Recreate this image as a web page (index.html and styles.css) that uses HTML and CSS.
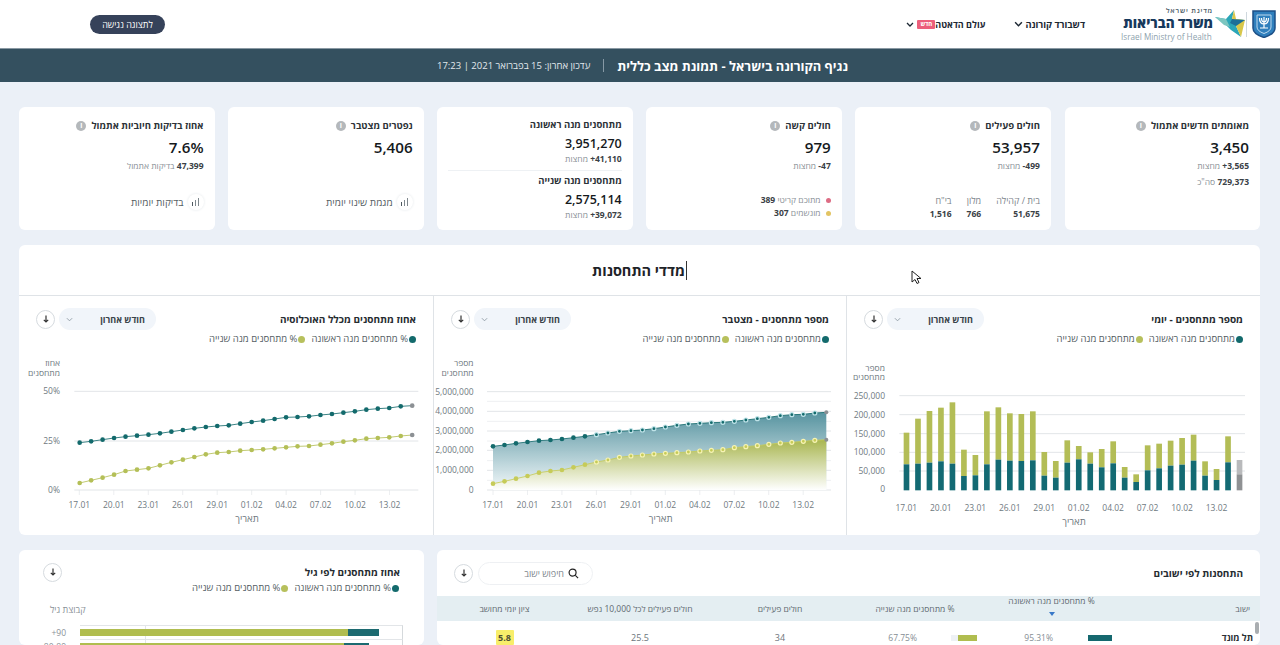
FILE: index.html
```html
<!DOCTYPE html>
<html lang="he" dir="rtl">
<head>
<meta charset="utf-8">
<title>נגיף הקורונה בישראל</title>
<link rel="stylesheet" href="styles.css">
</head>
<body>
<header class="topbar">
  <div class="brand">
    <svg class="emblem" viewBox="0 0 24 28" width="24" height="28">
      <path d="M1 1h22v17q0 6-11 9.500Q1 24 1 18z" fill="#2f7fbd" stroke="#1d4f86" stroke-width="1.500"/>
      <path d="M5 5h14v12q0 4-7 6.500Q5 21 5 17z" fill="none" stroke="#bcd9ee" stroke-width="1"/>
      <path d="M12 7v11M8 18h8M7.500 8q0 6 4.500 6t4.500-6M9.500 8q0 4 2.500 4t2.500-4" fill="none" stroke="#fff" stroke-width="1.200"/>
    </svg>
    <span class="brand-sep"></span>
    <svg class="star" viewBox="0 0 30 28" width="30" height="28">
      <polygon points="0,7 11,9 19,0 17,9 30,10 21,16 26,27 16,20 10,14" fill="#2ba6b8"/>
      <polygon points="0,7 11,9 15,17 9,15" fill="#7cc6c0"/>
      <polygon points="19,0 17,9 23,12 21,16 26,27 30,10 21,9" fill="#d8c74a"/>
      <polygon points="17,9 30,10 21,16 15,13" fill="#1c6f98"/>
    </svg>
    <div class="brand-text">
      <span class="brand-state">מדינת ישראל</span>
      <span class="brand-name">משרד הבריאות</span>
      <span class="brand-en" dir="ltr">Israel Ministry of Health</span>
    </div>
  </div>
  <nav class="nav">
    <a class="nav-item nav-first">דשבורד קורונה <svg class="chev" viewBox="0 0 8 5" width="9" height="6"><path d="M1 1l3 3 3-3" fill="none" stroke="#1c2733" stroke-width="1.300"/></svg></a>
    <a class="nav-item nav-second"><span class="nav-label">עולם הדאטה</span><span class="new">חדש</span><svg class="chev" viewBox="0 0 8 5" width="8" height="5"><path d="M1 1l3 3 3-3" fill="none" stroke="#1c2733" stroke-width="1.300"/></svg></a>
  </nav>
  <a class="access">לתצוגה נגישה</a>
</header>

<div class="strip">
  <h1>נגיף הקורונה בישראל - תמונת מצב כללית</h1>
  <span class="strip-sep"></span>
  <span class="updated">עדכון אחרון: 15 בפברואר 2021 | 17:23</span>
</div>

<main class="page">
  <section class="cards">
    <article class="card">
      <h3>מאומתים חדשים אתמול <i class="info">i</i></h3>
      <div class="value">3,450</div>
      <p class="sub"><b><bdi>+3,565</bdi></b> מחצות</p>
      <p class="sub sub-gap"><b>729,373</b> סה"כ</p>
    </article>
    <article class="card">
      <h3>חולים פעילים <i class="info">i</i></h3>
      <div class="value">53,957</div>
      <p class="sub"><b><bdi>-499</bdi></b> מחצות</p>
      <div class="split">
        <div><span>בית / קהילה</span><b>51,675</b></div>
        <div><span>מלון</span><b>766</b></div>
        <div><span>בי"ח</span><b>1,516</b></div>
      </div>
    </article>
    <article class="card">
      <h3>חולים קשה <i class="info">i</i></h3>
      <div class="value">979</div>
      <p class="sub"><b><bdi>-47</bdi></b> מחצות</p>
      <div class="dots">
        <p class="sub"><i class="dot dot-red"></i> מתוכם קריטי <b>389</b></p>
        <p class="sub"><i class="dot dot-gold"></i> מונשמים <b>307</b></p>
      </div>
    </article>
    <article class="card card-double">
      <h3>מתחסנים מנה ראשונה</h3>
      <div class="value">3,951,270</div>
      <p class="sub"><b><bdi>+41,110</bdi></b> מחצות</p>
      <hr>
      <h3>מתחסנים מנה שנייה</h3>
      <div class="value">2,575,114</div>
      <p class="sub"><b><bdi>+39,072</bdi></b> מחצות</p>
    </article>
    <article class="card">
      <h3>נפטרים מצטבר <i class="info">i</i></h3>
      <div class="value">5,406</div>
      <a class="trend"><span class="trend-icon"><i></i><i></i><i></i></span> מגמת שינוי יומית</a>
    </article>
    <article class="card">
      <h3>אחוז בדיקות חיוביות אתמול <i class="info">i</i></h3>
      <div class="value">7.6%</div>
      <p class="sub"><b>47,399</b> בדיקות אתמול</p>
      <a class="trend"><span class="trend-icon"><i></i><i></i><i></i></span> בדיקות יומיות</a>
    </article>
  </section>

  <section class="panel metrics">
    <h2 class="metrics-title"><span class="caret">מדדי התחסנות</span></h2>
    <div class="metric-cols">
      <div class="metric">
        <div class="metric-head">
          <h4>מספר מתחסנים - יומי</h4>
          <div class="controls">
            <span class="select">חודש אחרון <svg viewBox="0 0 8 5" width="7" height="5"><path d="M1 1l3 3 3-3" fill="none" stroke="#8d99a3" stroke-width="1"/></svg></span>
            <span class="down"><svg viewBox="0 0 10 10" width="10" height="10"><path d="M5 1.500v6.500M2.800 5.800L5 8l2.200-2.200" fill="none" stroke="#333" stroke-width="1.200"/></svg></span>
          </div>
        </div>
        <div class="legend"><span><i class="dot dot-teal"></i>מתחסנים מנה ראשונה</span><span><i class="dot dot-olive"></i>מתחסנים מנה שנייה</span></div>
        <svg class="plot" id="chart-daily" width="414" height="185" viewBox="0 162 1242 555"></svg>
      </div>
      <div class="metric">
        <div class="metric-head">
          <h4>מספר מתחסנים - מצטבר</h4>
          <div class="controls">
            <span class="select">חודש אחרון <svg viewBox="0 0 8 5" width="7" height="5"><path d="M1 1l3 3 3-3" fill="none" stroke="#8d99a3" stroke-width="1"/></svg></span>
            <span class="down"><svg viewBox="0 0 10 10" width="10" height="10"><path d="M5 1.500v6.500M2.800 5.800L5 8l2.200-2.200" fill="none" stroke="#333" stroke-width="1.200"/></svg></span>
          </div>
        </div>
        <div class="legend"><span><i class="dot dot-teal"></i>מתחסנים מנה ראשונה</span><span><i class="dot dot-olive"></i>מתחסנים מנה שנייה</span></div>
        <svg class="plot" id="chart-total" width="414" height="185" viewBox="0 162 1242 555"></svg>
      </div>
      <div class="metric">
        <div class="metric-head">
          <h4>אחוז מתחסנים מכלל האוכלוסיה</h4>
          <div class="controls">
            <span class="select">חודש אחרון <svg viewBox="0 0 8 5" width="7" height="5"><path d="M1 1l3 3 3-3" fill="none" stroke="#8d99a3" stroke-width="1"/></svg></span>
            <span class="down"><svg viewBox="0 0 10 10" width="10" height="10"><path d="M5 1.500v6.500M2.800 5.800L5 8l2.200-2.200" fill="none" stroke="#333" stroke-width="1.200"/></svg></span>
          </div>
        </div>
        <div class="legend"><span><i class="dot dot-teal"></i>% מתחסנים מנה ראשונה</span><span><i class="dot dot-olive"></i>% מתחסנים מנה שנייה</span></div>
        <svg class="plot" id="chart-percent" width="414" height="185" viewBox="12 162 1242 555"></svg>
      </div>
    </div>
  </section>

  <section class="bottom">
    <div class="panel towns">
      <div class="towns-head">
        <h4>התחסנות לפי ישובים</h4>
        <div class="controls">
          <span class="search"><svg viewBox="0 0 12 12" width="11" height="11"><circle cx="5" cy="5" r="3.800" fill="none" stroke="#222" stroke-width="1.300"/><path d="M8 8l3 3" stroke="#222" stroke-width="1.300"/></svg> חיפוש ישוב</span>
          <span class="down"><svg viewBox="0 0 10 10" width="10" height="10"><path d="M5 1.500v6.500M2.800 5.800L5 8l2.200-2.200" fill="none" stroke="#333" stroke-width="1.200"/></svg></span>
        </div>
      </div>
      <div class="trow thead">
        <span class="t-name">ישוב</span>
        <span class="t-sorted">% מתחסנים מנה ראשונה<i class="sort"></i></span>
        <span>% מתחסנים מנה שנייה</span>
        <span>חולים פעילים</span>
        <span>חולים פעילים לכל 10,000 נפש</span>
        <span>ציון יומי מחושב</span>
      </div>
      <div class="trow tbody">
        <b class="t-name">תל מונד</b>
        <span class="t-bar t-first"><i class="track"><i class="fill fill-teal" style="width:100%"></i></i>95.31%</span>
        <span class="t-bar t-second"><i class="track"><i class="fill fill-olive" style="width:72%"></i></i>67.75%</span>
        <span>34</span>
        <span>25.5</span>
        <span><b class="score">5.8</b></span>
      </div>
      <span class="scroll-thumb"></span>
    </div>
    <div class="panel ages">
      <div class="ages-head">
        <span class="down"><svg viewBox="0 0 10 10" width="10" height="10"><path d="M5 1.500v6.500M2.800 5.800L5 8l2.200-2.200" fill="none" stroke="#333" stroke-width="1.200"/></svg></span>
        <h4>אחוז מתחסנים לפי גיל</h4>
      </div>
      <div class="legend"><span><i class="dot dot-teal"></i>% מתחסנים מנה ראשונה</span><span><i class="dot dot-olive"></i>% מתחסנים מנה שנייה</span></div>
      <div class="age-axis">קבוצת גיל</div>
      <div class="age-row">
        <span class="age-label">+90</span>
        <div class="age-plot"><i class="age-bar age-bar-a"><i class="age-olive age-olive-a"></i></i></div>
      </div>
      <div class="age-row">
        <span class="age-label">80-89</span>
        <div class="age-plot"><i class="age-bar age-bar-b"><i class="age-olive age-olive-b"></i></i></div>
      </div>
    </div>
  </section>
</main>

<svg class="pointer" viewBox="0 0 11 15" width="11" height="15"><path d="M1 1v11l3-2.500 2 4 2-1-2-4h4z" fill="#fff" stroke="#222" stroke-width="1"/></svg>
<script src="charts.js"></script>
</body>
</html>
```
FILE: styles.css
```css
* { box-sizing: border-box; }
html, body { margin: 0; height: 645px; overflow: hidden; }
body {
  background: #ebf0f7;
  color: #20262c;
  font-family: "Open Sans", "Liberation Sans", "DejaVu Sans", sans-serif;
  position: relative;
}
h1, h2, h3, h4, p { margin: 0; }
i { font-style: normal; }

.topbar {
  height: 49px;
  background: #fff;
  display: flex;
  align-items: center;
  padding: 0 4px 0 90px;
  border-bottom: 1px solid #8a99a3;
}
.brand { display: flex; align-items: center; margin-left: 36px; }
.emblem { display: block; margin-bottom: 1px; }
.brand-sep { width: 1px; height: 25px; background: #cfd8de; margin: 0 5px 0 1px; }
.star { display: block; margin-left: 2px; }
.brand-text { display: flex; flex-direction: column; width: 92px; }
.brand-state { font-size: 7px; line-height: 9px; color: #4b5c68; font-weight: 600; letter-spacing: 0.800px; }
.brand-name { font-size: 13.500px; line-height: 17px; font-weight: 800; color: #17395c; white-space: nowrap; }
.brand-en { font-size: 8.200px; line-height: 10px; color: #8ea2ad; white-space: nowrap; text-align: left; }
.nav { display: flex; align-items: center; }
.nav-item { display: flex; align-items: center; gap: 3px; font-size: 9.300px; font-weight: 700; color: #1c2733; white-space: nowrap; }
.nav-first { gap: 2px; margin-left: 29px; }
.nav-label { font-size: 9px; margin-left: -3px; }
.chev { display: block; }
.new { background: #ec5f7b; color: #fff; font-size: 6px; line-height: 9px; width: 18px; text-align: center; border-radius: 1px; }
.access {
  margin-right: auto;
  width: 75px;
  height: 19px;
  border-radius: 10px;
  background: #36425a;
  color: #fff;
  font-size: 9px;
  line-height: 19px;
  text-align: center;
}

.strip {
  height: 33px;
  background: #34505f;
  color: #fff;
  display: flex;
  align-items: center;
  justify-content: center;
  padding-left: 5px;
}
.strip h1 { font-size: 12.900px; font-weight: 700; white-space: nowrap; }
.strip-sep { width: 1px; height: 13px; background: #8699a5; margin: 0 13px; }
.updated { font-size: 9.500px; color: #e2e9ed; white-space: nowrap; }

.page { padding: 25px 20px 0 19px; }
.cards { display: grid; grid-template-columns: repeat(6, 1fr); gap: 13.600px; }
.card {
  height: 123px;
  background: #fff;
  border-radius: 6px;
  padding: 13px 11px 9px;
  display: flex;
  flex-direction: column;
}
.card h3 { display: flex; align-items: center; gap: 5px; font-size: 9.500px; line-height: 12px; font-weight: 700; color: #2d3338; }
.info {
  width: 10px; height: 10px; border-radius: 50%;
  background: #b4b8bb; color: #fff;
  font-size: 7px; line-height: 10px; text-align: center; font-weight: 700;
}
.value { font-size: 15.200px; line-height: 20px; font-weight: 600; color: #15191c; margin-top: 5px; }
.sub { font-size: 8.500px; line-height: 12px; color: #8a9197; margin-top: 3px; }
.sub b { color: #3a4146; font-weight: 700; }
.sub-gap { margin-top: 4px; }
.split { margin-top: auto; margin-bottom: 1px; display: flex; gap: 15px; font-size: 9px; color: #7d858b; }
.split div { display: flex; flex-direction: column; gap: 1px; }
.split span { line-height: 12px; }
.split b { color: #3a4146; font-size: 8.500px; line-height: 12px; font-weight: 700; }
.split div:first-child { min-width: 43px; }
.dots { margin-top: auto; padding-bottom: 2px; }
.dots .sub { margin-top: 1px; }
.dots .dot { margin-left: 3px; }
.dot { display: inline-block; width: 5px; height: 5px; border-radius: 50%; margin-left: 1px; }
.dot-red { background: #dd6c84; }
.dot-gold { background: #e2c463; }
.dot-teal { background: #136a6c; width: 7px; height: 7px; }
.dot-olive { background: #b7c05c; width: 7px; height: 7px; }
.card-double { padding-top: 12px; }
.card-double .value { font-size: 12.500px; margin-top: 4px; line-height: 18px; }
.card-double .sub { margin-top: 1px; line-height: 10px; }
.card-double hr { border: 0; height: 1px; background: #eef1f4; width: 100%; margin: 6px 0 4px; }
.trend {
  margin-top: auto;
  display: flex; align-items: center; gap: 4px;
  font-size: 10px; color: #555e64; padding-bottom: 11px;
}
.trend-icon {
  width: 16px; height: 16px; border-radius: 50%;
  box-shadow: 0 0 3px #e3e7ea;
  display: flex; align-items: flex-end; justify-content: center; gap: 1.500px;
  padding-bottom: 4px;
}
.trend-icon i { width: 1.300px; background: #4f5a60; }
.trend-icon i:nth-child(1) { height: 8px; background: #7f888d; }
.trend-icon i:nth-child(2) { height: 6px; background: #7f888d; }
.trend-icon i:nth-child(3) { height: 4px; }

.panel { background: #fff; border-radius: 6px; }
.metrics { height: 290px; margin-top: 15px; overflow: hidden; }
.metrics-title {
  height: 51px;
  border-bottom: 1px solid #dfe3e7;
  text-align: center;
  font-size: 14.500px;
  line-height: 52px;
  font-weight: 700;
  color: #1e2328;
}
.caret { border-right: 1px solid #333; padding-right: 1px; }
.metric-cols { display: grid; grid-template-columns: 414px 413px 414px; }
.metric { height: 239px; border-left: 1px solid #dfe3e7; padding-top: 12px; }
.metric:last-child { border-left: 0; }
.metric-head { display: flex; justify-content: space-between; align-items: center; height: 22px; padding: 0 17px; }
.metric h4, .towns h4, .ages h4 { font-size: 10px; font-weight: 700; color: #262c31; white-space: nowrap; }
.controls { display: flex; align-items: center; gap: 4px; }
.select {
  width: 97px; height: 22px; border-radius: 11px;
  background: #f1f5fa;
  display: flex; align-items: center; justify-content: space-between;
  padding: 0 11px 0 7px;
  font-size: 9px; font-weight: 700; color: #3b444b;
  white-space: nowrap;
}
.down {
  width: 19px; height: 19px; border-radius: 50%;
  border: 1px solid #d6dbdf; background: #fff;
  display: flex; align-items: center; justify-content: center;
  flex: none;
}
.legend { display: flex; gap: 6px; padding: 3px 17px 0; font-size: 9.500px; line-height: 12px; color: #555e64; white-space: nowrap; }
.legend .dot { vertical-align: -0.500px; margin-left: 1px; }
.plot { display: block; direction: ltr; margin: 6px 0 0 auto; }
.plot text { font-family: "Open Sans", "Liberation Sans", sans-serif; font-size: 25.500px; fill: #6f7a81; }
.plot .axis-title { font-size: 29px; }

.bottom { display: grid; grid-template-columns: 823px 405px; gap: 13px; margin-top: 15px; }
.towns { height: 95px; position: relative; overflow: hidden; }
.towns-head { display: flex; justify-content: space-between; align-items: center; height: 46px; padding: 0 17px 0 0; }
.towns-head .controls { margin-left: 17px; gap: 5px; }
.search {
  width: 115px; height: 23px; border-radius: 12px;
  border: 1px solid #eef0f3;
  display: flex; align-items: center; gap: 4px;
  padding: 0 13px;
  font-size: 9px; color: #7c858b;
}
.trow { display: grid; grid-template-columns: 135px 147px 126px 144px 136px 135px; align-items: center; text-align: center; }
.thead { height: 25px; background: #e4eef2; font-size: 8.500px; color: #5f6a71; white-space: nowrap; }
.t-name { text-align: right; padding-right: 10px; }
.t-sorted { display: flex; flex-direction: column; align-items: center; margin-top: -6px; line-height: 12px; }
.sort { width: 0; height: 0; margin-top: 5px; border: 3px solid transparent; border-top: 4px solid #3878c8; border-bottom: 0; }
.tbody { height: 33px; font-size: 9px; color: #6c757b; }
.tbody b.t-name { color: #2a3035; font-size: 9px; padding-right: 7px; }
.t-bar { display: flex; align-items: center; font-size: 8.500px; color: #858d93; }
.t-first { padding-right: 13px; gap: 35px; }
.t-second { padding-right: 1px; gap: 34px; }
.track { display: block; height: 6px; background: #eef1f5; }
.t-first .track { width: 24px; }
.t-second .track { width: 26px; }
.fill { display: block; height: 6px; }
.fill-teal { background: #15686f; }
.fill-olive { background: #b0bd4f; }
.score { display: inline-block; width: 18px; line-height: 15px; background: #f8ee6a; color: #4c4f35; border-radius: 1px; font-size: 9px; }
.scroll-thumb { position: absolute; top: 72px; right: 1px; width: 4px; height: 12px; background: #a9adb0; border-radius: 2px; }

.ages { height: 95px; padding-top: 13px; overflow: hidden; }
.ages-head { direction: ltr; display: flex; justify-content: space-between; align-items: center; padding: 0 24px; height: 18px; }
.ages .legend { padding: 0 25px 0; margin-top: 1px; }
.age-axis { font-size: 9px; color: #8a9298; white-space: nowrap; line-height: 12px; margin-top: 10px; text-align: left; padding-left: 31px; }
.age-row { direction: ltr; display: flex; align-items: center; height: 14px; }
.age-axis + .age-row { margin-top: 9px; }
.age-label { width: 47px; text-align: right; font-size: 8.500px; color: #8a9298; flex: none; }
.age-plot {
  margin-left: 14px; width: 323px; height: 14px;
  border-right: 1px solid #d5d9dc; border-top: 1px solid #e2e5e8;
  display: flex; align-items: center;
  background: linear-gradient(#e2e5e8, #e2e5e8) 65px 0 / 1px 100% no-repeat;
}
.age-bar { display: block; height: 7px; background: #1c6a70; }
.age-bar-a { width: 299px; }
.age-bar-b { width: 289px; }
.age-olive { display: block; height: 7px; background: #b0bd4f; }
.age-olive-a { width: 268px; }
.age-olive-b { width: 264px; }

.pointer { position: absolute; left: 911px; top: 270px; }
```
FILE: charts.js
```js
const NS = 'http://www.w3.org/2000/svg';
const X_LABELS = ['17.01', '20.01', '23.01', '26.01', '29.01', '01.02', '04.02', '07.02', '10.02', '13.02'];
const TEAL = '#136a6c', OLIVE = '#b4bf57', GREY = '#8c9094';

function add(svg, name, attrs, text) {
  const el = document.createElementNS(NS, name);
  for (const k in attrs) el.setAttribute(k, attrs[k]);
  if (text !== undefined) el.textContent = text;
  svg.appendChild(el);
  return el;
}

function frame(svg, o) {
  o.grid.filter(g => !g.bare).forEach(g => add(svg, 'line', { x1: o.gx0, x2: o.gx1, y1: g.y, y2: g.y, stroke: g.minor ? '#eef0f2' : '#e2e5e8', 'stroke-width': 3 }));
  o.grid.filter(g => g.label !== undefined).forEach(g =>
    add(svg, 'text', { x: o.lx, y: g.y + 9, 'text-anchor': 'end' }, g.label));
  o.ylabel.forEach((t, i) =>
    add(svg, 'text', { x: o.lx, y: o.yl + i * 29, 'text-anchor': 'end' }, t));
  X_LABELS.forEach((t, i) => {
    const x = o.xl + i * 103.4;
    if (o.ticks) add(svg, 'line', { x1: x, x2: x, y1: 579, y2: 594, stroke: '#e2e5e8', 'stroke-width': 2 });
    add(svg, 'text', { x, y: o.xy, 'text-anchor': 'middle' }, t);
  });
  add(svg, 'text', { x: o.xl + 503, y: o.xy + 42, 'text-anchor': 'middle', class: 'axis-title' }, 'תאריך');
}

function series(svg, x0, step, ys, color, halo) {
  const pts = ys.map((y, i) => [x0 + i * step, y]);
  add(svg, 'polyline', { points: pts.map(p => p.join(',')).join(' '), fill: 'none', stroke: color, 'stroke-width': 2.5 });
  pts.forEach((p, i) => {
    const last = i === pts.length - 1;
    add(svg, 'circle', {
      cx: p[0], cy: p[1], r: halo && i > 8 ? 6 : 7,
      fill: last ? GREY : color,
      stroke: !last && halo && i > 8 ? halo : 'none',
      'stroke-width': 3.5
    });
  });
  return pts;
}

/* daily bars */
(function () {
  const svg = document.getElementById('chart-daily');
  const first = [502,500,497,493,500,537,535,502,488,491,492,490,536,542,497,487,500,511,499,542,555,520,514,506,503,491,536,549,496,532];
  const total = [407,365,342,332,316,458,474,343,331,349,351,343,465,492,430,447,466,456,433,510,532,445,440,431,423,413,493,516,418,489];
  frame(svg, {
    gx0: 160, gx1: 1197, lx: 117, xl: 181, xy: 641, yl: 221, ticks: false,
    ylabel: ['מספר', 'מתחסנים'],
    grid: [
      { y: 296, label: '250,000' }, { y: 353, label: '200,000' }, { y: 410, label: '150,000' },
      { y: 466, label: '100,000' }, { y: 522, label: '50,000' }, { y: 577, label: '0', bare: true }
    ]
  });
  first.forEach((top, i) => {
    const x = 173 + i * 34.45, last = i === 29;
    add(svg, 'rect', { x, y: total[i], width: 17, height: top - total[i], fill: last ? '#b9babc' : '#b3bd56' });
    add(svg, 'rect', { x, y: top, width: 17, height: 580 - top, fill: last ? '#8f9193' : '#136a73' });
  });
})();

/* cumulative */
(function () {
  const svg = document.getElementById('chart-total');
  const t = [448,444,439,435,431,429,426,422,418,413,408,403,401,399,395,390,385,381,379,377,376,373,369,365,361,356,353,352,348,346];
  const o = [560,553,545,537,527,522,519,511,503,495,489,481,477,474,471,469,467,465,462,460,458,452,449,446,442,438,436,433,430,428];
  const defs = add(svg, 'defs', {});
  const grad = (id, stops) => {
    const g = add(defs, 'linearGradient', { id, x1: 0, x2: 0, y1: 0, y2: 1 });
    stops.forEach(s => add(g, 'stop', { offset: s[0], 'stop-color': s[1] }));
  };
  grad('fill-first', [[0, '#4e8e9b'], [1, '#f2f8fa']]);
  grad('fill-second', [[0, '#aab64a'], [1, '#ffffff']]);
  frame(svg, {
    gx0: 165, gx1: 1197, lx: 125, xl: 183, xy: 634, yl: 208, ticks: true,
    ylabel: ['מספר', 'מתחסנים'],
    grid: [
      { y: 284, label: '5,000,000' }, { y: 313, minor: true }, { y: 343, label: '4,000,000' }, { y: 373, minor: true },
      { y: 402, label: '3,000,000' }, { y: 432, minor: true }, { y: 460, label: '2,000,000' }, { y: 491, minor: true },
      { y: 520, label: '1,000,000' }, { y: 550, minor: true }, { y: 579, label: '0' }
    ]
  });
  const x = i => 183 + i * 34.48;
  const area = (ys, id) => add(svg, 'polygon', {
    points: ys.map((y, i) => x(i) + ',' + y).join(' ') + ' ' + x(29) + ',579 ' + x(0) + ',579',
    fill: 'url(#' + id + ')', opacity: 0.95
  });
  area(t, 'fill-first');
  area(o, 'fill-second');
  series(svg, 183, 34.48, t, TEAL, '#bfe3e8');
  series(svg, 183, 34.48, o, '#c6cb58', '#f6f3b4');
})();

/* percent */
(function () {
  const svg = document.getElementById('chart-percent');
  const t = [437,433,428,423,419,416,413,409,404,399,394,390,387,385,380,375,371,366,361,360,358,354,351,347,343,338,335,333,328,326];
  const o = [558,550,542,533,522,518,514,505,496,488,480,472,467,465,461,459,457,454,451,448,447,443,439,434,430,425,423,421,417,414];
  frame(svg, {
    gx0: 178, gx1: 1210, lx: 135, xl: 193, xy: 634, yl: 208, ticks: true,
    ylabel: ['אחוז', 'מתחסנים'],
    grid: [{ y: 283, label: '50%' }, { y: 432, label: '25%' }, { y: 579, label: '0%' }]
  });
  series(svg, 194, 34.4, t, TEAL);
  series(svg, 194, 34.4, o, OLIVE);
})();
```
